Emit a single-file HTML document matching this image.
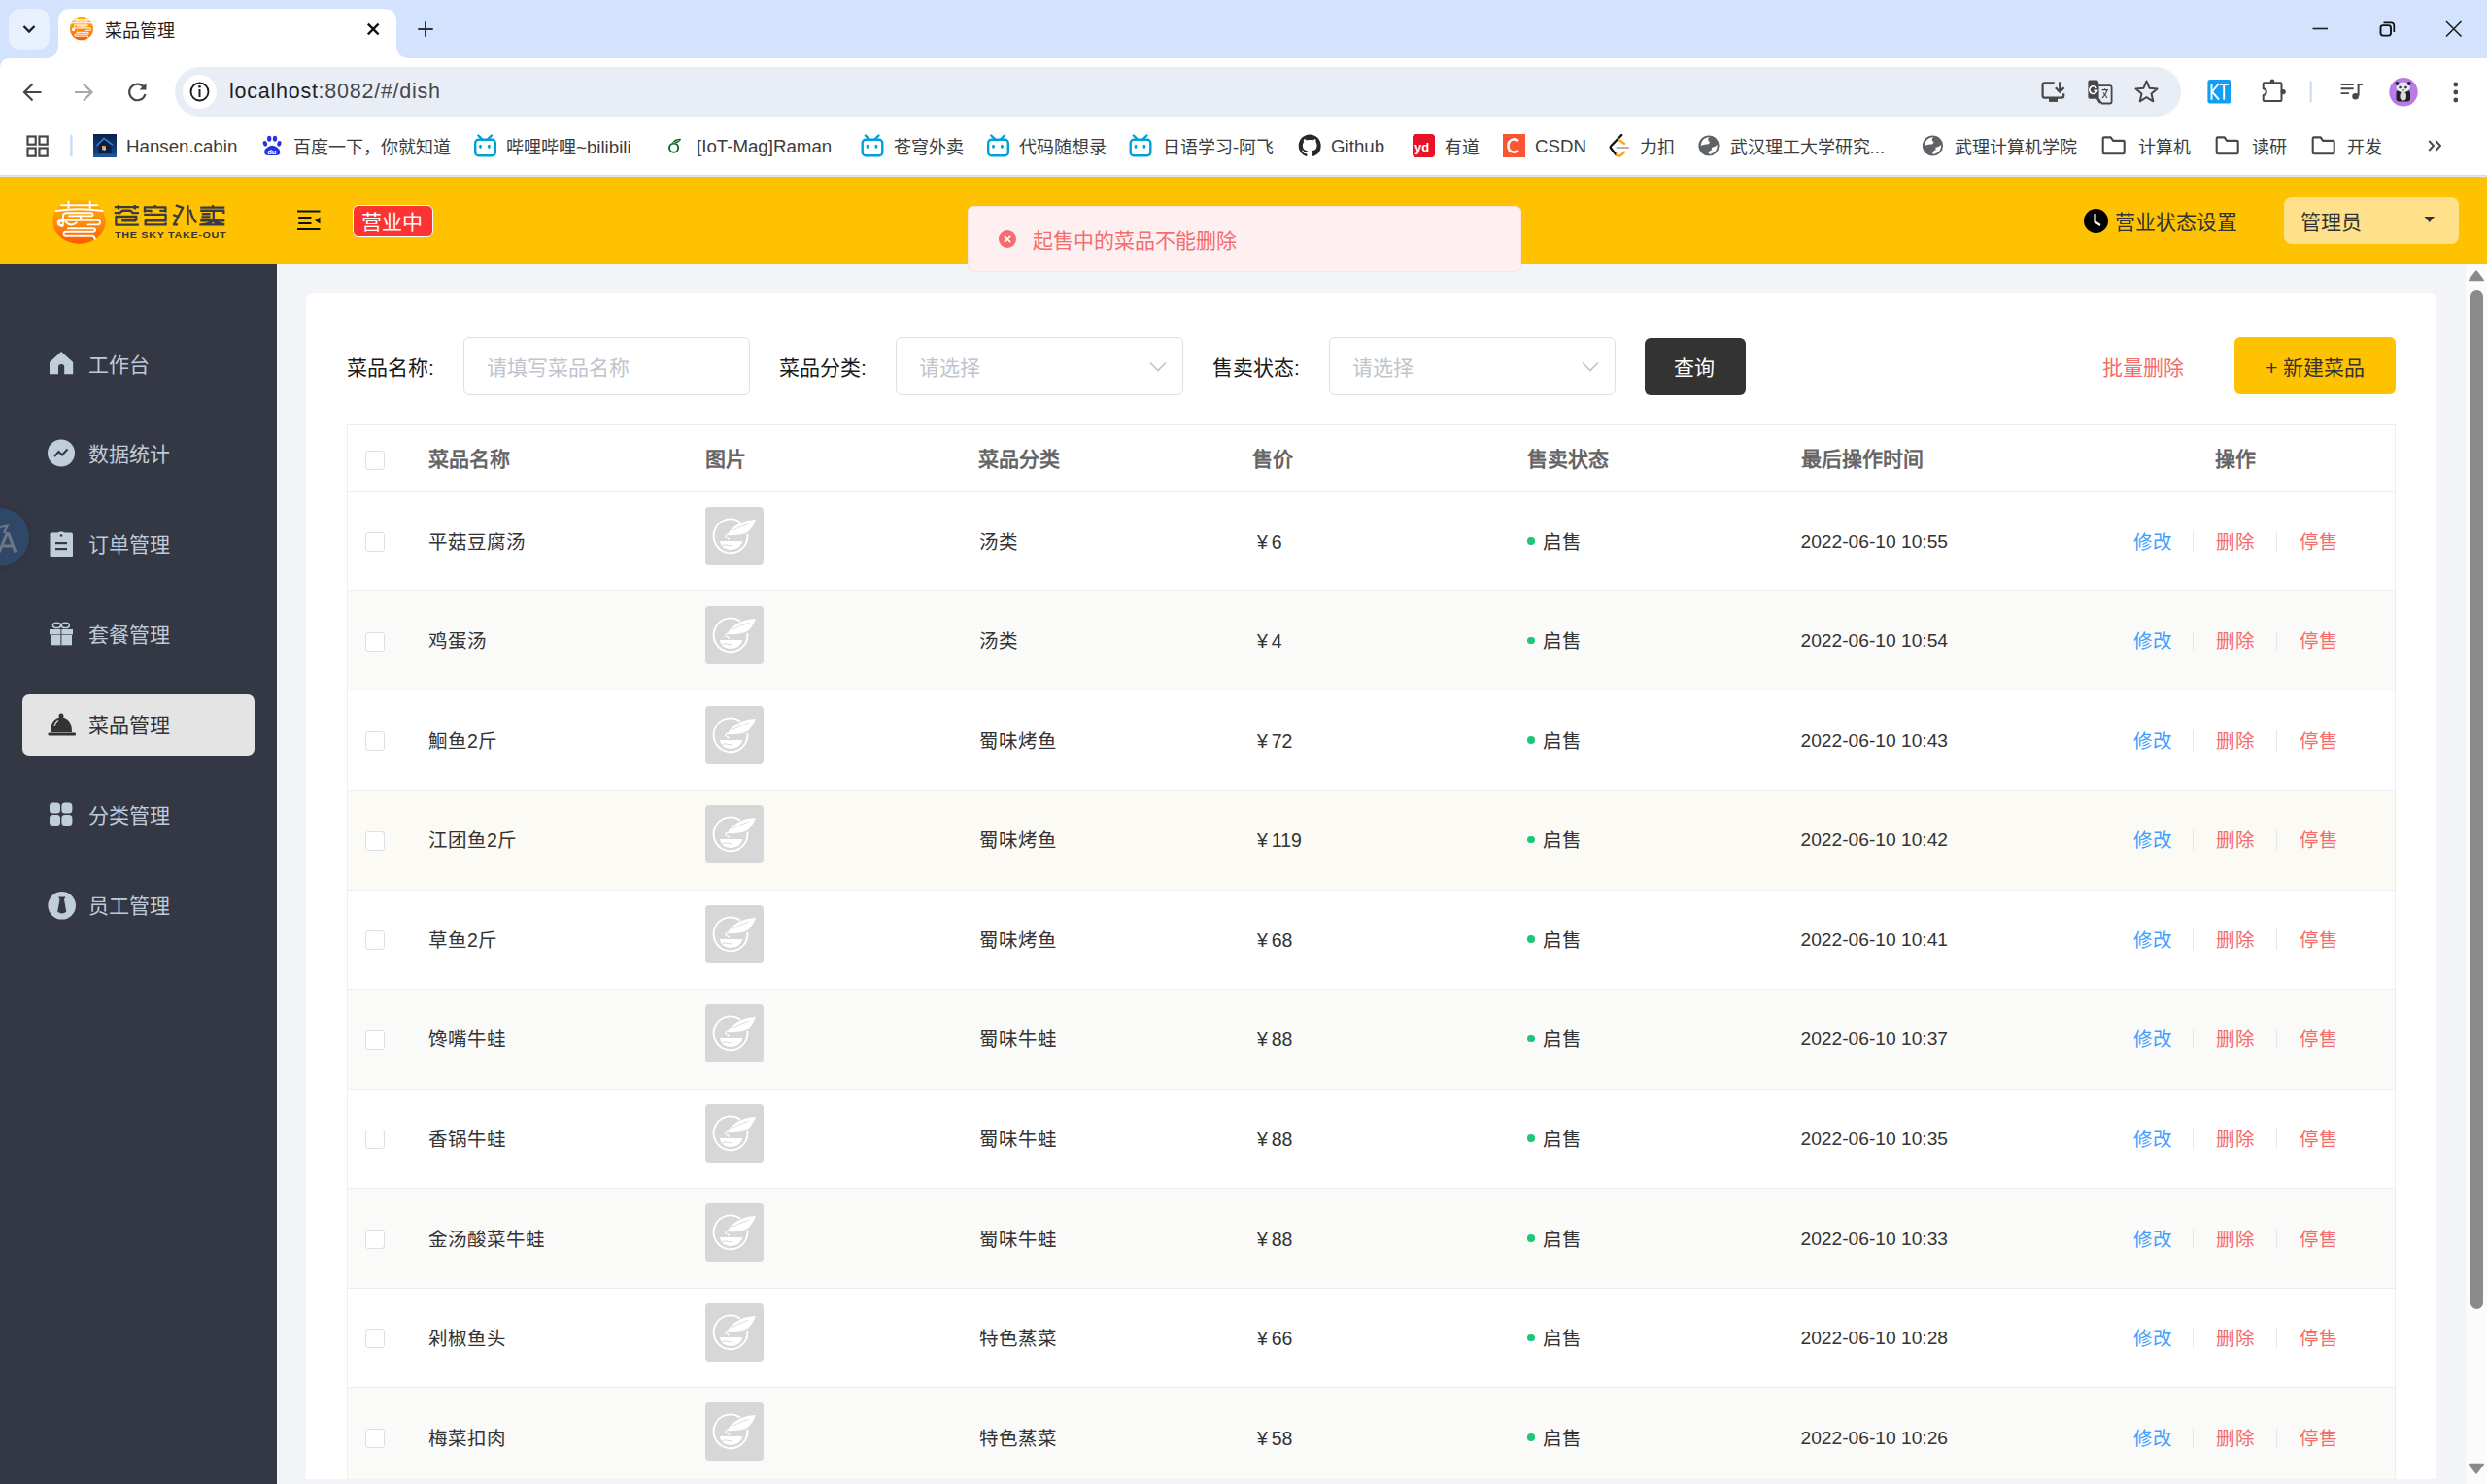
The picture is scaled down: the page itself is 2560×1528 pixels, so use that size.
<!DOCTYPE html><html lang="zh-CN"><head><meta charset="utf-8"><title>菜品管理</title><style>
*{box-sizing:border-box;margin:0;padding:0}
html,body{width:2560px;height:1528px;overflow:hidden;background:#fff}
body{position:relative;font-family:"Liberation Sans",sans-serif;color:#333}
.abs{position:absolute}
.t{position:absolute;white-space:nowrap;line-height:1}
svg{position:absolute;overflow:visible}
</style></head><body>
<div class="abs" style="left:0;top:0;width:2560px;height:60px;background:#d3e3fd"></div>
<div class="abs" style="left:0;top:60px;width:2560px;height:120px;background:#fff"></div>
<div class="abs" style="left:0;top:180px;width:2560px;height:1px;background:#dadce0"></div>
<svg style="left:0;top:60px" width="12" height="12"><path d="M0 0 H11 Q0 0 0 11 Z" fill="#d3e3fd"/></svg>
<div class="abs" style="left:0;top:181px;width:2560px;height:1px;background:#e3e7ef"></div>
<div class="abs" style="left:9px;top:9px;width:42px;height:42px;border-radius:12px;background:#e9f0fd"></div>
<svg style="left:0;top:0" width="60" height="60"><polyline points="24.5,27 30,32.5 35.5,27" fill="none" stroke="#1f1f1f" stroke-width="2.4"/></svg>
<svg style="left:0;top:0" width="460" height="61"><path d="M46 60 Q60 60 60 46 L60 22 Q60 9 73 9 L395 9 Q408 9 408 22 L408 46 Q408 60 422 60 Z" fill="#fff"/></svg>
<svg style="left:0;top:0" width="120" height="60">
<defs><linearGradient id="fg" x1="0" y1="0" x2="0" y2="1"><stop offset="0" stop-color="#ffb000"/><stop offset="0.55" stop-color="#ff8a0a"/><stop offset="1" stop-color="#ff5800"/></linearGradient></defs>
<g transform="translate(84 29.6) scale(0.44 0.515) translate(-33.5 -30)">
<ellipse cx="33.5" cy="30" rx="27.3" ry="22.8" fill="url(#fg)"/>
<g stroke="#fff" stroke-width="2.6" fill="none" stroke-linecap="round" opacity="0.85">
<path d="M15 13.3 H52.5"/><path d="M22.5 9.5 V16 M44.7 9.5 V16"/><path d="M9.8 19 Q33 15.5 57.5 19"/>
<path d="M17 27.5 V24 Q17 21.3 20.5 21.3 H45.5 Q47.5 21.3 47.5 22.9 Q47.5 24.4 45.5 24.4 H23"/><path d="M35 24.5 V27.5"/>
<path d="M19 28.7 H52.5 Q55 28.7 55 31 Q55 33.4 52.5 33.4 H42.6"/>
<path d="M22 37.3 H47.5 Q50 37.3 50 39 Q50 40.8 47.5 40.8 H20 Q17.5 40.8 17.5 42.8 Q17.5 44.7 20 44.7 H47.5 Q49.6 45.5 49.6 48"/>
</g><circle cx="14.3" cy="31.5" r="3.6" fill="#fff"/></g>
</svg>
<div class="t" style="left:107.5px;top:23px;font-size:18px;color:#1f1f1f;font-weight:normal;">菜品管理</div>
<svg style="left:0;top:0" width="460" height="60"><path d="M378.8 24.6 L389.6 35.4 M389.6 24.6 L378.8 35.4" stroke="#111" stroke-width="2.3"/><path d="M438 23 V37 M431 30 H445" stroke="#333" stroke-width="2" stroke-linecap="round"/></svg>
<svg style="left:2360px;top:0" width="200" height="60"><path d="M20.5 29.5 H36" stroke="#1f1f1f" stroke-width="1.6"/><rect x="90.5" y="26.1" width="10.5" height="10.5" rx="2.5" fill="none" stroke="#111" stroke-width="1.9"/><path d="M93.5 23.3 H101.2 Q104.3 23.3 104.3 26.4 V33" fill="none" stroke="#111" stroke-width="1.7"/><path d="M158 22 L173.5 37.5 M173.5 22 L158 37.5" stroke="#1f1f1f" stroke-width="1.6"/></svg>
<svg style="left:0;top:60px" width="240" height="60"><path d="M42.5 35 H25 M33.5 26.5 L25 35 L33.5 43.5" fill="none" stroke="#474747" stroke-width="2.2"/><path d="M77 35 H94.5 M86 26.5 L94.5 35 L86 43.5" fill="none" stroke="#a8a8a8" stroke-width="2.2"/><path d="M148.5 30.5 A8.3 8.3 0 1 0 149.5 37" fill="none" stroke="#474747" stroke-width="2.2"/><path d="M150.5 25.5 V32.5 H143.5 Z" fill="#474747"/></svg>
<div class="abs" style="left:180px;top:69px;width:2065px;height:51px;border-radius:26px;background:#e9eef6"></div>
<div class="abs" style="left:188px;top:77px;width:35px;height:35px;border-radius:50%;background:#fff"></div>
<svg style="left:0;top:60px" width="240" height="60"><circle cx="205.5" cy="34.5" r="9" fill="none" stroke="#1f1f1f" stroke-width="1.9"/><path d="M205.5 32 V40" stroke="#1f1f1f" stroke-width="2"/><circle cx="205.5" cy="29.2" r="1.3" fill="#1f1f1f"/></svg>
<div class="t" style="left:236px;top:84px;font-size:21.5px;color:#1f1f1f;font-weight:normal;letter-spacing:0.75px">localhost<span style="color:#474747">:8082/#/dish</span></div>
<svg style="left:2090px;top:60px" width="470" height="60"><path d="M24.7 25.3 H14.5 Q12.6 25.3 12.6 27.2 V38.8 Q12.6 40.7 14.5 40.7 H32.3 Q34.2 40.7 34.2 38.8 V36.2" fill="none" stroke="#474747" stroke-width="2.2"/><rect x="19" y="40.7" width="9" height="4.2" fill="#474747"/><path d="M30.2 24.2 V34.5 M25.8 30.2 L30.2 34.6 L34.6 30.2" fill="none" stroke="#474747" stroke-width="2.2"/><path d="M61 22.4 H68.3 Q69.3 22.4 69.7 23.5 L70.6 26.5 V41 L74.5 46.5 H72 Q70.8 46.5 70.2 45.5 L68 41.7 H61 Q59.4 41.7 59.4 40.1 V24 Q59.4 22.4 61 22.4 Z" fill="#474747"/><path d="M70.3 28.1 H81.6 Q83.6 28.1 83.6 30.1 V44.5 Q83.6 46.5 81.6 46.5 H73" fill="none" stroke="#474747" stroke-width="1.8"/><path d="M68.2 30.8 A3.9 3.9 0 1 0 68.6 33.2 H65.3" fill="none" stroke="#fff" stroke-width="1.6"/><path d="M73.5 32.7 H80 M76.5 31.2 V32.7 M79 32.7 Q78 37 74 41 M75 35.5 L79 41" fill="none" stroke="#474747" stroke-width="1.2"/><path d="M119.5 23.5 L122.6 30.8 L130.5 31.5 L124.5 36.6 L126.3 44.3 L119.5 40.2 L112.7 44.3 L114.5 36.6 L108.5 31.5 L116.4 30.8 Z" fill="none" stroke="#474747" stroke-width="2" stroke-linejoin="round"/><rect x="182.4" y="22" width="24" height="24.4" rx="2.5" fill="#129ff3"/><path d="M186.5 26 V42.7 M194 26 L187 34.4 L194 42.7 M194.6 27 H203.8 M199.2 27 V42.7" stroke="#fff" stroke-width="1.9" fill="none"/><path d="M240.7 25.3 H257.5 Q258.5 25.3 258.5 26.3 V43 Q258.5 44 257.5 44 H240.7 Q239.7 44 239.7 43 V38 Q242.8 37.5 242.8 34.6 Q242.8 31.7 239.7 31.2 V26.3 Q239.7 25.3 240.7 25.3 Z" fill="none" stroke="#474747" stroke-width="2" stroke-linejoin="round"/><circle cx="249" cy="23.8" r="2.3" fill="#474747"/><circle cx="260.2" cy="34.6" r="2.6" fill="#474747"/><rect x="287.6" y="23" width="2.2" height="22.5" rx="1" fill="#cfdcf8"/><path d="M319.6 27 H332.7 M319.6 31.3 H332.7 M319.6 36.1 H328" stroke="#474747" stroke-width="1.9"/><path d="M337.6 26 V38.5" stroke="#474747" stroke-width="2"/><path d="M336.6 27 H342" stroke="#474747" stroke-width="1.9"/><circle cx="334.6" cy="39.2" r="3.3" fill="#474747"/><circle cx="384" cy="34.8" r="14.7" fill="#b97be6"/><rect x="376.5" y="33" width="14.5" height="11.5" rx="3" fill="#222"/><ellipse cx="383.7" cy="39" rx="3.3" ry="4.6" fill="#ddd"/><ellipse cx="383.6" cy="29.8" rx="7.2" ry="5.4" fill="#e9e9e9"/><circle cx="377.4" cy="26" r="2" fill="#222"/><circle cx="389.8" cy="26" r="2" fill="#222"/><circle cx="380.5" cy="30" r="1.3" fill="#333"/><circle cx="386.5" cy="30" r="1.3" fill="#333"/><path d="M382 32.5 Q383.6 33.8 385.2 32.5" stroke="#333" stroke-width="0.9" fill="none"/><circle cx="437.8" cy="27" r="2.4" fill="#474747"/><circle cx="437.8" cy="35" r="2.4" fill="#474747"/><circle cx="437.8" cy="43" r="2.4" fill="#474747"/></svg>
<svg style="left:0;top:120px" width="2560" height="60">
<rect x="28.5" y="20.5" width="8.2" height="8.2" fill="none" stroke="#474747" stroke-width="2.2"/>
<rect x="28.5" y="32.5" width="8.2" height="8.2" fill="none" stroke="#474747" stroke-width="2.2"/>
<rect x="40.5" y="20.5" width="8.2" height="8.2" fill="none" stroke="#474747" stroke-width="2.2"/>
<rect x="40.5" y="32.5" width="8.2" height="8.2" fill="none" stroke="#474747" stroke-width="2.2"/>
<rect x="72.2" y="18.5" width="2.4" height="23" rx="1.2" fill="#c9dbfb"/>
<defs><linearGradient id="hg" x1="0" y1="0" x2="0" y2="1"><stop offset="0" stop-color="#0a2150"/><stop offset="1" stop-color="#164a8a"/></linearGradient></defs>
<rect x="96" y="18" width="24" height="24" fill="url(#hg)"/><path d="M101.5 38 V28.5 L107 23 L114.5 29.5 V38 Z" fill="#0b1e42"/><path d="M99.5 30 L107 22.6 L116 29.2" fill="none" stroke="#3b7fc8" stroke-width="1.5"/><rect x="105" y="30" width="3.8" height="4.4" fill="#f2a33a"/><rect x="107" y="32" width="1.8" height="2.4" fill="#7fe8ff"/><rect x="96" y="38.5" width="24" height="3.5" fill="#1d5aa0" opacity="0.8"/>
<g fill="#2932e1"><ellipse cx="272.9" cy="27.8" rx="2.1" ry="2.9" transform="rotate(-15 272.9 27.8)"/><ellipse cx="277.2" cy="22.8" rx="2.2" ry="3"/><ellipse cx="283" cy="22.8" rx="2.2" ry="3"/><ellipse cx="287.4" cy="27.8" rx="2.1" ry="2.9" transform="rotate(15 287.4 27.8)"/><path d="M272.2 36.5 Q272.5 33 275.5 31.5 Q278 29.8 280 29.8 Q282.5 29.8 285 31.5 Q288 33.5 288.3 36.5 Q288.5 40 284 40 H276.5 Q272 40 272.2 36.5 Z"/></g>
<text x="275.2" y="38.6" font-family="Liberation Sans" font-size="7.6" font-weight="bold" fill="#fff">du</text>
<g transform="translate(487.5,18)"><rect x="1.7" y="5.8" width="20.6" height="16.4" rx="3.3" fill="none" stroke="#00a1d6" stroke-width="2.4"/><path d="M4.8 1.5 L8.3 4.8 M18.5 1.5 L15 4.8" stroke="#00a1d6" stroke-width="2.4" stroke-linecap="round"/><ellipse cx="7" cy="12.8" rx="1.45" ry="2.1" fill="#00a1d6"/><ellipse cx="15.9" cy="12.8" rx="1.45" ry="2.1" fill="#00a1d6"/></g>
<g transform="translate(886,18)"><rect x="1.7" y="5.8" width="20.6" height="16.4" rx="3.3" fill="none" stroke="#00a1d6" stroke-width="2.4"/><path d="M4.8 1.5 L8.3 4.8 M18.5 1.5 L15 4.8" stroke="#00a1d6" stroke-width="2.4" stroke-linecap="round"/><ellipse cx="7" cy="12.8" rx="1.45" ry="2.1" fill="#00a1d6"/><ellipse cx="15.9" cy="12.8" rx="1.45" ry="2.1" fill="#00a1d6"/></g>
<g transform="translate(1015.5,18)"><rect x="1.7" y="5.8" width="20.6" height="16.4" rx="3.3" fill="none" stroke="#00a1d6" stroke-width="2.4"/><path d="M4.8 1.5 L8.3 4.8 M18.5 1.5 L15 4.8" stroke="#00a1d6" stroke-width="2.4" stroke-linecap="round"/><ellipse cx="7" cy="12.8" rx="1.45" ry="2.1" fill="#00a1d6"/><ellipse cx="15.9" cy="12.8" rx="1.45" ry="2.1" fill="#00a1d6"/></g>
<g transform="translate(1162,18)"><rect x="1.7" y="5.8" width="20.6" height="16.4" rx="3.3" fill="none" stroke="#00a1d6" stroke-width="2.4"/><path d="M4.8 1.5 L8.3 4.8 M18.5 1.5 L15 4.8" stroke="#00a1d6" stroke-width="2.4" stroke-linecap="round"/><ellipse cx="7" cy="12.8" rx="1.45" ry="2.1" fill="#00a1d6"/><ellipse cx="15.9" cy="12.8" rx="1.45" ry="2.1" fill="#00a1d6"/></g>
<circle cx="693.6" cy="32.2" r="4.6" fill="none" stroke="#0a6b2a" stroke-width="1.9"/><path d="M691.5 28.5 Q692.5 24.5 696.5 23.3 Q699 22.6 701.2 22.9 Q700.3 25.6 697.5 26.9 Q695 27.8 692.8 27.6 Z" fill="#0a6b2a"/><path d="M693 27.5 Q696 25.5 699 24.3" stroke="#fff" stroke-width="0.6" fill="none"/>
<path transform="translate(1336.7 18.5) scale(1.4375)" fill="#24292e" d="M8 0C3.58 0 0 3.58 0 8c0 3.54 2.29 6.53 5.47 7.59.4.07.55-.17.55-.38 0-.19-.01-.82-.01-1.49-2.01.37-2.53-.49-2.69-.94-.09-.23-.48-.94-.82-1.13-.28-.15-.68-.52-.01-.53.63-.01 1.08.58 1.23.82.72 1.21 1.87.87 2.33.66.07-.52.28-.87.51-1.07-1.780-.2-3.64-.89-3.64-3.95 0-.87.31-1.59.82-2.150-.08-.2-.36-1.02.08-2.12 0 0 .67-.21 2.2.82.64-.18 1.32-.27 2-.27.68 0 1.36.09 2 .27 1.53-1.04 2.2-.82 2.2-.82.44 1.1.16 1.92.08 2.12.51.56.82 1.27.82 2.15 0 3.07-1.87 3.75-3.65 3.95.29.25.54.73.54 1.48 0 1.07-.01 1.93-.01 2.2 0 .21.15.46.55.38A8.013 8.013 0 0016 8c0-4.42-3.58-8-8-8z"/>
<rect x="1454" y="18" width="23" height="24" rx="3.5" fill="#e8132a"/><text x="1456" y="35.5" font-family="Liberation Sans" font-size="13" font-weight="bold" fill="#fff">yd</text>
<rect x="1547" y="18" width="23" height="24" fill="#fc5531"/><path d="M1563 25 Q1560.5 23 1557.5 23.5 Q1552.5 24.5 1552.5 30 Q1552.5 36 1557.5 36.5 Q1560.5 37 1563 35" fill="none" stroke="#fff" stroke-width="2.6"/>
<path d="M1669.3 19 L1658.5 30 Q1657 31.5 1658.5 33 L1663.6 39.4" fill="none" stroke="#111" stroke-width="2.4" stroke-linecap="round"/><path d="M1666.2 23.7 L1672 27.9 M1663.8 39.6 Q1666.8 41.6 1669.3 39.3 L1672 36.5" fill="none" stroke="#ffa116" stroke-width="2.4" stroke-linecap="round"/><path d="M1664.6 32 H1676" stroke="#b3b3b3" stroke-width="2.2" stroke-linecap="round"/>
<circle cx="1759" cy="30" r="10.6" fill="#5f6368"/><path d="M1750.7 30 Q1751 22 1759.7 21 Q1757.2 23.5 1758.7 25 Q1761.2 26.5 1758.2 28.5 Q1754 28 1750.7 30 Z" fill="#fff"/><path d="M1767.7 29 Q1768.2 36.5 1760.2 39 Q1757.2 37.5 1759.7 35.5 Q1763.2 34 1761.7 32 Q1765.2 31.5 1767.7 29 Z" fill="#fff"/>
<circle cx="1989.5" cy="30" r="10.6" fill="#5f6368"/><path d="M1981.2 30 Q1981.5 22 1990.2 21 Q1987.7 23.5 1989.2 25 Q1991.7 26.5 1988.7 28.5 Q1984.5 28 1981.2 30 Z" fill="#fff"/><path d="M1998.2 29 Q1998.7 36.5 1990.7 39 Q1987.7 37.5 1990.2 35.5 Q1993.7 34 1992.2 32 Q1995.7 31.5 1998.2 29 Z" fill="#fff"/>
<path d="M2164.7 22.6 Q2164.7 21.4 2165.9 21.4 H2172.7 L2175.1 24.9 H2185.5 Q2186.7 24.9 2186.7 26.1 V37.1 Q2186.7 38.3 2185.5 38.3 H2165.9 Q2164.7 38.3 2164.7 37.1 Z" fill="none" stroke="#474747" stroke-width="2.1" stroke-linejoin="round"/>
<path d="M2281.7 22.6 Q2281.7 21.4 2282.9 21.4 H2289.7 L2292.1 24.9 H2302.5 Q2303.7 24.9 2303.7 26.1 V37.1 Q2303.7 38.3 2302.5 38.3 H2282.9 Q2281.7 38.3 2281.7 37.1 Z" fill="none" stroke="#474747" stroke-width="2.1" stroke-linejoin="round"/>
<path d="M2380.7 22.6 Q2380.7 21.4 2381.9 21.4 H2388.7 L2391.1 24.9 H2401.5 Q2402.7 24.9 2402.7 26.1 V37.1 Q2402.7 38.3 2401.5 38.3 H2381.9 Q2380.7 38.3 2380.7 37.1 Z" fill="none" stroke="#474747" stroke-width="2.1" stroke-linejoin="round"/>
<path d="M2500.3 25 L2505 30 L2500.3 35 M2507.3 25 L2512 30 L2507.3 35" fill="none" stroke="#474747" stroke-width="1.9"/>
</svg>
<div class="t" style="left:130px;top:141.8px;font-size:18px;color:#3c3c3c;font-weight:normal;"><span style="font-size:18.7px">Hansen.cabin</span></div>
<div class="t" style="left:301.5px;top:143px;font-size:18px;color:#3c3c3c;font-weight:normal;">百度一下，你就知道</div>
<div class="t" style="left:521px;top:143px;font-size:18px;color:#3c3c3c;font-weight:normal;">哔哩哔哩<span style="font-size:18.7px">~bilibili</span></div>
<div class="t" style="left:717px;top:141.8px;font-size:18px;color:#3c3c3c;font-weight:normal;"><span style="font-size:18.7px">[IoT-Mag]Raman</span></div>
<div class="t" style="left:920px;top:143px;font-size:18px;color:#3c3c3c;font-weight:normal;">苍穹外卖</div>
<div class="t" style="left:1049px;top:143px;font-size:18px;color:#3c3c3c;font-weight:normal;">代码随想录</div>
<div class="t" style="left:1197px;top:143px;font-size:18px;color:#3c3c3c;font-weight:normal;">日语学习<span style="font-size:18.7px">-</span>阿飞</div>
<div class="t" style="left:1370px;top:141.8px;font-size:18px;color:#3c3c3c;font-weight:normal;"><span style="font-size:18.7px">Github</span></div>
<div class="t" style="left:1487px;top:143px;font-size:18px;color:#3c3c3c;font-weight:normal;">有道</div>
<div class="t" style="left:1580px;top:141.8px;font-size:18px;color:#3c3c3c;font-weight:normal;"><span style="font-size:18.7px">CSDN</span></div>
<div class="t" style="left:1688px;top:143px;font-size:18px;color:#3c3c3c;font-weight:normal;">力扣</div>
<div class="t" style="left:1780.5px;top:143px;font-size:18px;color:#3c3c3c;font-weight:normal;">武汉理工大学研究<span style="font-size:18.7px">...</span></div>
<div class="t" style="left:2012px;top:143px;font-size:18px;color:#3c3c3c;font-weight:normal;">武理计算机学院</div>
<div class="t" style="left:2201px;top:143px;font-size:18px;color:#3c3c3c;font-weight:normal;">计算机</div>
<div class="t" style="left:2318px;top:143px;font-size:18px;color:#3c3c3c;font-weight:normal;">读研</div>
<div class="t" style="left:2416px;top:143px;font-size:18px;color:#3c3c3c;font-weight:normal;">开发</div>
<div class="abs" style="left:0;top:182px;width:2560px;height:90px;background:#ffc200"></div>
<svg style="left:48px;top:198px" width="70" height="58" viewBox="0 0 70 58">
<defs><linearGradient id="lg" x1="0" y1="0" x2="0" y2="1"><stop offset="0" stop-color="#ffb000"/><stop offset="0.55" stop-color="#ff8a0a"/><stop offset="1" stop-color="#ff5800"/></linearGradient></defs>
<ellipse cx="33.5" cy="30" rx="27.3" ry="22.8" fill="url(#lg)"/>
<g stroke="#fff" stroke-width="1.9" fill="none" stroke-linecap="round">
<path d="M15 13.3 H52.5"/>
<path d="M22.5 9.5 V16 M44.7 9.5 V16"/>
<path d="M9.8 19 Q33 15.5 57.5 19"/>
<path d="M17 27.5 V24 Q17 21.3 20.5 21.3 H45.5 Q47.5 21.3 47.5 22.9 Q47.5 24.4 45.5 24.4 H23"/>
<path d="M35 24.5 V27.5"/>
<path d="M19 28.7 H52.5 Q55 28.7 55 31 Q55 33.4 52.5 33.4 H42.6"/>
<path d="M19.5 30.5 Q25 36 30.8 31.3"/>
<path d="M22 37.3 H47.5 Q50 37.3 50 39 Q50 40.8 47.5 40.8 H20 Q17.5 40.8 17.5 42.8 Q17.5 44.7 20 44.7 H47.5 Q49.6 45.5 49.6 48"/>
</g>
<circle cx="14.3" cy="31.5" r="3.4" fill="#fff"/><circle cx="16.8" cy="29" r="2" fill="#fff"/><circle cx="15.5" cy="33.8" r="2.3" fill="#fff"/>
<circle cx="15.2" cy="31.8" r="1.2" fill="#ff8f0a"/>
</svg>
<svg style="left:110px;top:200px" width="130" height="40" viewBox="110 200 130 40"><g fill="none" stroke="#383b44" stroke-width="2.35" stroke-linecap="butt" stroke-linejoin="round">
<path d="M117.8 213.1 H142.9 M122 211 V215.4 M138.8 211 V215.4"/>
<path d="M117.8 219.1 H123.5 Q125 216.7 127 216.7 H133.5 Q135.3 216.7 136.6 219.1 H142.9"/>
<path d="M140.3 227.2 V223 H119.4 V231.6 H142.9 M125.2 227.2 H140.3"/>
<path d="M159.7 211 V213.2 M149 218.6 V213.3 H170.4 V218.6 M149.7 216.9 H155.5 V218.6 M164.4 216.9 H170.4"/>
<path d="M148.2 220.9 H170.6 V227.2 H149.7 V231.4 H171.7 M170.6 229.3 V231.4"/>
<path d="M180.8 211.4 L188.3 213.8 L179 231.4 M177.8 231.4 H183 M178.2 221 L183.4 223.2"/>
<path d="M193.4 211.2 V231.9 M195.7 215.7 Q198 226 202.2 229.3"/>
<path d="M206.2 213.6 H231.3 M219 211 V213.6 M206.2 216.7 H230.3 V219.9 M207.8 220.2 H216.6 M207.4 223.3 H216.6 M219.8 218 V227.2 M206.2 227.2 H231.3 M219.8 227.2 Q216 231 206.2 231.4 H231.3 M220 228.5 L231.3 231.4"/>
</g></svg>
<div class="t" style="left:117.5px;top:238.2px;font-size:9.2px;color:#353535;font-weight:bold;letter-spacing:0.6px;transform:scaleX(1.17);transform-origin:0 0">THE SKY TAKE-OUT</div>
<svg style="left:300px;top:210px" width="40" height="32"><path d="M6 7.4 H29.5 M7.2 14 H20.5 M7.2 20 H20.5 M6 26.1 H29.5" stroke="#111" stroke-width="2"/><path d="M29.5 13.5 L24 17 L29.5 20.5 Z" fill="#111"/></svg>
<div class="abs" style="left:363px;top:211px;width:83px;height:33px;border-radius:6px;background:#fd3333;border:1.5px solid #fff"></div>
<div class="t" style="left:372px;top:218px;font-size:21px;color:#fff;font-weight:normal;">营业中</div>
<div class="abs" style="left:996px;top:212px;width:570px;height:68px;border-radius:6px;background:#fef0f0;border:1.5px solid #fde2e2;z-index:20"></div>
<svg style="left:1020px;top:230px;z-index:21" width="40" height="32"><circle cx="17" cy="16" r="9" fill="#f56c6c"/><path d="M13.8 12.8 L20.2 19.2 M20.2 12.8 L13.8 19.2" stroke="#fff" stroke-width="1.8"/></svg>
<div class="t" style="left:1062.5px;top:237px;font-size:21px;color:#f56c6c;font-weight:normal;z-index:21">起售中的菜品不能删除</div>
<svg style="left:2140px;top:210px" width="40" height="36"><circle cx="17.5" cy="17.5" r="12.5" fill="#000"/><path d="M16.5 10 V18.5 L22 22" stroke="#fff" stroke-width="2.2" fill="none"/></svg>
<div class="t" style="left:2177px;top:218px;font-size:21px;color:#333;font-weight:normal;">营业状态设置</div>
<div class="abs" style="left:2351px;top:203px;width:180px;height:48px;border-radius:8px;background:#ffe18b"></div>
<div class="t" style="left:2368px;top:218px;font-size:21px;color:#333;font-weight:normal;">管理员</div>
<svg style="left:2490px;top:218px" width="20" height="16"><path d="M5.5 5 H16 L10.75 11 Z" fill="#333"/></svg>
<div class="abs" style="left:0;top:272px;width:285px;height:1256px;background:#343744"></div>
<div class="abs" style="left:23px;top:715px;width:239px;height:63px;border-radius:7px;background:#e4e4e4"></div>
<div class="t" style="left:91px;top:364.5px;font-size:21px;color:#bfcbd9;font-weight:normal;">工作台</div>
<div class="t" style="left:91px;top:457.4px;font-size:21px;color:#bfcbd9;font-weight:normal;">数据统计</div>
<div class="t" style="left:91px;top:550.3px;font-size:21px;color:#bfcbd9;font-weight:normal;">订单管理</div>
<div class="t" style="left:91px;top:643.2px;font-size:21px;color:#bfcbd9;font-weight:normal;">套餐管理</div>
<div class="t" style="left:91px;top:736.1px;font-size:21px;color:#333;font-weight:normal;">菜品管理</div>
<div class="t" style="left:91px;top:829.0px;font-size:21px;color:#bfcbd9;font-weight:normal;">分类管理</div>
<div class="t" style="left:91px;top:921.9px;font-size:21px;color:#bfcbd9;font-weight:normal;">员工管理</div>
<svg style="left:0;top:272px" width="285" height="700">
<path d="M63 90 L75.2 101 V113.2 H66.2 V106 Q66.2 103 63.1 103 Q60 103 60 106 V113.2 H51 V101 Z" fill="#c0cedc"/>
<circle cx="63" cy="194.5" r="14" fill="#c0cedc"/><path d="M56 198 L60.5 193 L64 196.5 L69.5 190.5" stroke="#343744" stroke-width="2" fill="none"/>
<rect x="51.5" y="276.5" width="23.5" height="25" rx="1.8" fill="#c0cedc"/><path d="M59 277 Q63 273.5 67 277 Z" fill="#c0cedc"/><circle cx="63" cy="279.5" r="1.3" fill="#343744"/><rect x="57" y="286" width="12" height="2.2" fill="#343744"/><rect x="57" y="292" width="12" height="2.2" fill="#343744"/>
<rect x="51" y="376" width="24" height="5.4" fill="#c0cedc"/><rect x="52.2" y="382" width="21.8" height="10.3" fill="#c0cedc"/><path d="M62.9 376 V392.5" stroke="#343744" stroke-width="1"/><ellipse cx="58.5" cy="371.9" rx="4" ry="2.6" fill="none" stroke="#c0cedc" stroke-width="1.6"/><ellipse cx="67.3" cy="371.9" rx="4" ry="2.6" fill="none" stroke="#c0cedc" stroke-width="1.6"/>
<circle cx="63" cy="465" r="2.5" fill="#333"/><path d="M52 482 Q52 467 63 466.5 Q74 467 74 482 Z" fill="#333"/><rect x="49.5" y="482.5" width="28.5" height="3" rx="1" fill="#333"/><path d="M56 476 Q57 471 60 469.5" stroke="#e4e4e4" stroke-width="1.2" fill="none"/>
<rect x="51" y="554.5" width="11" height="11" rx="3.5" fill="#c0cedc"/><rect x="63.4" y="554.5" width="11" height="11" rx="3.5" fill="#c0cedc"/><rect x="51" y="566.9" width="11" height="11" rx="3.5" fill="#c0cedc"/><rect x="63.4" y="566.9" width="11" height="11" rx="3.5" fill="#c0cedc"/>
<circle cx="63.7" cy="660.3" r="14.3" fill="#c0cedc"/><path d="M60 651.6 H67.5 L66 654 L68.3 666.8 Q63.8 670.3 59.2 666.8 L61.5 654 Z" fill="#343744"/>
</svg>
<div class="abs" style="left:-30px;top:523px;width:60px;height:60px;border-radius:50%;background:#2f4868;box-shadow:0 0 6px rgba(0,0,0,0.15)"></div>
<svg style="left:0;top:523px" width="32" height="60"><path d="M-1 45.5 L7.2 26.5 H8.8 L16 45.5 M2.5 39 H12.5" stroke="#6e7684" stroke-width="3" fill="none"/><path d="M0 20 L7.5 18.5 L4 26" stroke="#6e7684" stroke-width="2.2" fill="none"/></svg>
<div class="abs" style="left:285px;top:272px;width:2253px;height:1256px;background:#f3f4f7"></div>
<div class="abs" style="left:2538px;top:272px;width:22px;height:1256px;background:#fbfbfb"></div>
<svg style="left:2538px;top:272px" width="22" height="1256"><path d="M11 7 L18.3 16.5 H3.7 Z" fill="#8a8a8a" stroke="#8a8a8a" stroke-width="1.5" stroke-linejoin="round"/><rect x="5" y="27" width="13" height="1049" rx="6.5" fill="#8a8a8a"/><path d="M11 1245 L18.3 1235.5 H3.7 Z" fill="#8a8a8a" stroke="#8a8a8a" stroke-width="1.5" stroke-linejoin="round"/></svg>
<div class="abs" style="left:315px;top:302px;width:2193px;height:1221px;border-radius:7px 7px 0 0;background:#fff;overflow:hidden">
<div class="t" style="left:42px;top:66px;font-size:21px;color:#1a1a1a;font-weight:normal;">菜品名称:</div>
<div class="abs" style="left:162px;top:45px;width:295px;height:60px;border:1.5px solid #dcdfe6;border-radius:6px"></div>
<div class="t" style="left:186px;top:66px;font-size:21px;color:#c0c4cc;font-weight:normal;">请填写菜品名称</div>
<div class="t" style="left:487px;top:66px;font-size:21px;color:#1a1a1a;font-weight:normal;">菜品分类:</div>
<div class="abs" style="left:607px;top:45px;width:295.5px;height:60px;border:1.5px solid #dcdfe6;border-radius:6px"></div>
<div class="t" style="left:631px;top:66px;font-size:21px;color:#c0c4cc;font-weight:normal;">请选择</div>
<div class="t" style="left:933px;top:66px;font-size:21px;color:#1a1a1a;font-weight:normal;">售卖状态:</div>
<div class="abs" style="left:1053px;top:45px;width:294.5px;height:60px;border:1.5px solid #dcdfe6;border-radius:6px"></div>
<div class="t" style="left:1077px;top:66px;font-size:21px;color:#c0c4cc;font-weight:normal;">请选择</div>
<svg style="left:865px;top:66px" width="24" height="20"><path d="M4 5.5 L12 13.5 L20 5.5" fill="none" stroke="#c0c4cc" stroke-width="1.6"/></svg>
<svg style="left:1310px;top:66px" width="24" height="20"><path d="M4 5.5 L12 13.5 L20 5.5" fill="none" stroke="#c0c4cc" stroke-width="1.6"/></svg>
<div class="abs" style="left:1377.5px;top:46px;width:104.5px;height:58.5px;background:#333;border-radius:6px"></div>
<div class="t" style="left:1408px;top:66px;font-size:21px;color:#fff;font-weight:normal;">查询</div>
<div class="t" style="left:1849px;top:66px;font-size:21px;color:#f56c6c;font-weight:normal;">批量删除</div>
<div class="abs" style="left:1985px;top:45px;width:166px;height:58.5px;background:#ffc200;border-radius:6px"></div>
<div class="t" style="left:2017px;top:66px;font-size:21px;color:#333;font-weight:normal;">+ 新建菜品</div>
<div class="abs" style="left:42px;top:204.5px;width:2109px;height:102.53px;background:#fff"></div>
<div class="abs" style="left:42px;top:307.03px;width:2109px;height:102.53px;background:#fafaf9"></div>
<div class="abs" style="left:42px;top:409.56px;width:2109px;height:102.53px;background:#fff"></div>
<div class="abs" style="left:42px;top:512.09px;width:2109px;height:102.53px;background:#fbfaf4"></div>
<div class="abs" style="left:42px;top:614.62px;width:2109px;height:102.53px;background:#fff"></div>
<div class="abs" style="left:42px;top:717.15px;width:2109px;height:102.53px;background:#fafaf9"></div>
<div class="abs" style="left:42px;top:819.68px;width:2109px;height:102.53px;background:#fff"></div>
<div class="abs" style="left:42px;top:922.21px;width:2109px;height:102.53px;background:#fafaf9"></div>
<div class="abs" style="left:42px;top:1024.74px;width:2109px;height:102.53px;background:#fff"></div>
<div class="abs" style="left:42px;top:1127.27px;width:2109px;height:102.53px;background:#fafaf9"></div>
<div class="abs" style="left:42px;top:135px;width:2109px;height:1px;background:#ebeef5"></div>
<div class="abs" style="left:42px;top:135px;width:1px;height:1300px;background:#ebeef5"></div>
<div class="abs" style="left:2150px;top:135px;width:1px;height:1300px;background:#ebeef5"></div>
<div class="abs" style="left:42px;top:203.5px;width:2109px;height:1px;background:#ebeef5"></div>
<div class="abs" style="left:42px;top:306.0px;width:2109px;height:1px;background:#ebeef5"></div>
<div class="abs" style="left:42px;top:408.6px;width:2109px;height:1px;background:#ebeef5"></div>
<div class="abs" style="left:42px;top:511.1px;width:2109px;height:1px;background:#ebeef5"></div>
<div class="abs" style="left:42px;top:613.6px;width:2109px;height:1px;background:#ebeef5"></div>
<div class="abs" style="left:42px;top:716.1px;width:2109px;height:1px;background:#ebeef5"></div>
<div class="abs" style="left:42px;top:818.7px;width:2109px;height:1px;background:#ebeef5"></div>
<div class="abs" style="left:42px;top:921.2px;width:2109px;height:1px;background:#ebeef5"></div>
<div class="abs" style="left:42px;top:1023.7px;width:2109px;height:1px;background:#ebeef5"></div>
<div class="abs" style="left:42px;top:1126.3px;width:2109px;height:1px;background:#ebeef5"></div>
<div class="abs" style="left:61px;top:161.5px;width:20px;height:20px;border:1.2px solid #dcdfe6;border-radius:3px;background:#fff"></div>
<div class="t" style="left:125.5px;top:160px;font-size:21px;color:#666;font-weight:bold;">菜品名称</div>
<div class="t" style="left:410.5px;top:160px;font-size:21px;color:#666;font-weight:bold;">图片</div>
<div class="t" style="left:692px;top:160px;font-size:21px;color:#666;font-weight:bold;">菜品分类</div>
<div class="t" style="left:974px;top:160px;font-size:21px;color:#666;font-weight:bold;">售价</div>
<div class="t" style="left:1257px;top:160px;font-size:21px;color:#666;font-weight:bold;">售卖状态</div>
<div class="t" style="left:1538.5px;top:160px;font-size:21px;color:#666;font-weight:bold;">最后操作时间</div>
<div class="t" style="left:1964.5px;top:160px;font-size:21px;color:#666;font-weight:bold;">操作</div>
<div class="abs" style="left:61px;top:246.1px;width:20px;height:20px;border:1.2px solid #dcdfe6;border-radius:3px;background:#fff"></div>
<div class="t" style="left:126px;top:246.8px;font-size:19.5px;color:#333;font-weight:normal;">平菇豆腐汤</div>
<div class="abs" style="left:411px;top:219.5px;width:60px;height:60px;border-radius:4px;background:#d7d7d7;overflow:hidden"><svg width="60" height="60" viewBox="0 0 60 60" style="position:absolute;left:0;top:0">
<path d="M36 15.6 A17.4 17.4 0 1 0 43.3 27.8" fill="none" stroke="#fff" stroke-width="1.9"/>
<path d="M22.5 29 Q26 22 35 17 Q42 13.5 52 13 Q49 21 44 25.5 Q38 29.8 22.5 29 Z" fill="#fff"/>
<path d="M27.5 24.5 Q36 20 44.6 17.2" stroke="#d8d8d8" stroke-width="0.9" fill="none"/>
<path d="M23.2 28 Q19 30 22 31.5 Q25.5 32.5 23.5 33.4" stroke="#fff" stroke-width="1.3" fill="none"/>
<path d="M14.8 34.9 H38.2 Q36.5 43.8 26 44 Q16.5 43.5 14.8 34.9 Z" fill="#fff"/>
<path d="M17.5 39.6 Q21 38 24 39.6 Q26 40.3 28 39.5" stroke="#d8d8d8" stroke-width="1" fill="none"/>
</svg></div>
<div class="t" style="left:692.5px;top:246.8px;font-size:19.5px;color:#333;font-weight:normal;">汤类</div>
<div class="t" style="left:979px;top:246.8px;font-size:19.5px;color:#333;font-weight:normal;">¥&thinsp;6</div>
<div class="abs" style="left:1257px;top:251.3px;width:7.5px;height:7.5px;border-radius:50%;background:#1dc779"></div>
<div class="t" style="left:1272.5px;top:246.8px;font-size:19.5px;color:#333;font-weight:normal;">启售</div>
<div class="t" style="left:1538.5px;top:245.8px;font-size:19.2px;color:#333;font-weight:normal;">2022-06-10 10:55</div>
<div class="t" style="left:1880.5px;top:246.8px;font-size:19.5px;color:#419eff;font-weight:normal;">修改</div>
<div class="abs" style="left:1942px;top:245.3px;width:1.2px;height:20.5px;background:#e4e7ed"></div>
<div class="t" style="left:1966px;top:246.8px;font-size:19.5px;color:#f56c6c;font-weight:normal;">删除</div>
<div class="abs" style="left:2028px;top:245.3px;width:1.2px;height:20.5px;background:#e4e7ed"></div>
<div class="t" style="left:2052px;top:246.8px;font-size:19.5px;color:#f56c6c;font-weight:normal;">停售</div>
<div class="abs" style="left:61px;top:348.6px;width:20px;height:20px;border:1.2px solid #dcdfe6;border-radius:3px;background:#fff"></div>
<div class="t" style="left:126px;top:349.3px;font-size:19.5px;color:#333;font-weight:normal;">鸡蛋汤</div>
<div class="abs" style="left:411px;top:322.0px;width:60px;height:60px;border-radius:4px;background:#d7d7d7;overflow:hidden"><svg width="60" height="60" viewBox="0 0 60 60" style="position:absolute;left:0;top:0">
<path d="M36 15.6 A17.4 17.4 0 1 0 43.3 27.8" fill="none" stroke="#fff" stroke-width="1.9"/>
<path d="M22.5 29 Q26 22 35 17 Q42 13.5 52 13 Q49 21 44 25.5 Q38 29.8 22.5 29 Z" fill="#fff"/>
<path d="M27.5 24.5 Q36 20 44.6 17.2" stroke="#d8d8d8" stroke-width="0.9" fill="none"/>
<path d="M23.2 28 Q19 30 22 31.5 Q25.5 32.5 23.5 33.4" stroke="#fff" stroke-width="1.3" fill="none"/>
<path d="M14.8 34.9 H38.2 Q36.5 43.8 26 44 Q16.5 43.5 14.8 34.9 Z" fill="#fff"/>
<path d="M17.5 39.6 Q21 38 24 39.6 Q26 40.3 28 39.5" stroke="#d8d8d8" stroke-width="1" fill="none"/>
</svg></div>
<div class="t" style="left:692.5px;top:349.3px;font-size:19.5px;color:#333;font-weight:normal;">汤类</div>
<div class="t" style="left:979px;top:349.3px;font-size:19.5px;color:#333;font-weight:normal;">¥&thinsp;4</div>
<div class="abs" style="left:1257px;top:353.8px;width:7.5px;height:7.5px;border-radius:50%;background:#1dc779"></div>
<div class="t" style="left:1272.5px;top:349.3px;font-size:19.5px;color:#333;font-weight:normal;">启售</div>
<div class="t" style="left:1538.5px;top:348.3px;font-size:19.2px;color:#333;font-weight:normal;">2022-06-10 10:54</div>
<div class="t" style="left:1880.5px;top:349.3px;font-size:19.5px;color:#419eff;font-weight:normal;">修改</div>
<div class="abs" style="left:1942px;top:347.8px;width:1.2px;height:20.5px;background:#e4e7ed"></div>
<div class="t" style="left:1966px;top:349.3px;font-size:19.5px;color:#f56c6c;font-weight:normal;">删除</div>
<div class="abs" style="left:2028px;top:347.8px;width:1.2px;height:20.5px;background:#e4e7ed"></div>
<div class="t" style="left:2052px;top:349.3px;font-size:19.5px;color:#f56c6c;font-weight:normal;">停售</div>
<div class="abs" style="left:61px;top:451.1px;width:20px;height:20px;border:1.2px solid #dcdfe6;border-radius:3px;background:#fff"></div>
<div class="t" style="left:126px;top:451.8px;font-size:19.5px;color:#333;font-weight:normal;">鮰鱼2斤</div>
<div class="abs" style="left:411px;top:424.6px;width:60px;height:60px;border-radius:4px;background:#d7d7d7;overflow:hidden"><svg width="60" height="60" viewBox="0 0 60 60" style="position:absolute;left:0;top:0">
<path d="M36 15.6 A17.4 17.4 0 1 0 43.3 27.8" fill="none" stroke="#fff" stroke-width="1.9"/>
<path d="M22.5 29 Q26 22 35 17 Q42 13.5 52 13 Q49 21 44 25.5 Q38 29.8 22.5 29 Z" fill="#fff"/>
<path d="M27.5 24.5 Q36 20 44.6 17.2" stroke="#d8d8d8" stroke-width="0.9" fill="none"/>
<path d="M23.2 28 Q19 30 22 31.5 Q25.5 32.5 23.5 33.4" stroke="#fff" stroke-width="1.3" fill="none"/>
<path d="M14.8 34.9 H38.2 Q36.5 43.8 26 44 Q16.5 43.5 14.8 34.9 Z" fill="#fff"/>
<path d="M17.5 39.6 Q21 38 24 39.6 Q26 40.3 28 39.5" stroke="#d8d8d8" stroke-width="1" fill="none"/>
</svg></div>
<div class="t" style="left:692.5px;top:451.8px;font-size:19.5px;color:#333;font-weight:normal;">蜀味烤鱼</div>
<div class="t" style="left:979px;top:451.8px;font-size:19.5px;color:#333;font-weight:normal;">¥&thinsp;72</div>
<div class="abs" style="left:1257px;top:456.3px;width:7.5px;height:7.5px;border-radius:50%;background:#1dc779"></div>
<div class="t" style="left:1272.5px;top:451.8px;font-size:19.5px;color:#333;font-weight:normal;">启售</div>
<div class="t" style="left:1538.5px;top:450.8px;font-size:19.2px;color:#333;font-weight:normal;">2022-06-10 10:43</div>
<div class="t" style="left:1880.5px;top:451.8px;font-size:19.5px;color:#419eff;font-weight:normal;">修改</div>
<div class="abs" style="left:1942px;top:450.3px;width:1.2px;height:20.5px;background:#e4e7ed"></div>
<div class="t" style="left:1966px;top:451.8px;font-size:19.5px;color:#f56c6c;font-weight:normal;">删除</div>
<div class="abs" style="left:2028px;top:450.3px;width:1.2px;height:20.5px;background:#e4e7ed"></div>
<div class="t" style="left:2052px;top:451.8px;font-size:19.5px;color:#f56c6c;font-weight:normal;">停售</div>
<div class="abs" style="left:61px;top:553.7px;width:20px;height:20px;border:1.2px solid #dcdfe6;border-radius:3px;background:#fff"></div>
<div class="t" style="left:126px;top:554.4px;font-size:19.5px;color:#333;font-weight:normal;">江团鱼2斤</div>
<div class="abs" style="left:411px;top:527.1px;width:60px;height:60px;border-radius:4px;background:#d7d7d7;overflow:hidden"><svg width="60" height="60" viewBox="0 0 60 60" style="position:absolute;left:0;top:0">
<path d="M36 15.6 A17.4 17.4 0 1 0 43.3 27.8" fill="none" stroke="#fff" stroke-width="1.9"/>
<path d="M22.5 29 Q26 22 35 17 Q42 13.5 52 13 Q49 21 44 25.5 Q38 29.8 22.5 29 Z" fill="#fff"/>
<path d="M27.5 24.5 Q36 20 44.6 17.2" stroke="#d8d8d8" stroke-width="0.9" fill="none"/>
<path d="M23.2 28 Q19 30 22 31.5 Q25.5 32.5 23.5 33.4" stroke="#fff" stroke-width="1.3" fill="none"/>
<path d="M14.8 34.9 H38.2 Q36.5 43.8 26 44 Q16.5 43.5 14.8 34.9 Z" fill="#fff"/>
<path d="M17.5 39.6 Q21 38 24 39.6 Q26 40.3 28 39.5" stroke="#d8d8d8" stroke-width="1" fill="none"/>
</svg></div>
<div class="t" style="left:692.5px;top:554.4px;font-size:19.5px;color:#333;font-weight:normal;">蜀味烤鱼</div>
<div class="t" style="left:979px;top:554.4px;font-size:19.5px;color:#333;font-weight:normal;">¥&thinsp;119</div>
<div class="abs" style="left:1257px;top:558.9px;width:7.5px;height:7.5px;border-radius:50%;background:#1dc779"></div>
<div class="t" style="left:1272.5px;top:554.4px;font-size:19.5px;color:#333;font-weight:normal;">启售</div>
<div class="t" style="left:1538.5px;top:553.4px;font-size:19.2px;color:#333;font-weight:normal;">2022-06-10 10:42</div>
<div class="t" style="left:1880.5px;top:554.4px;font-size:19.5px;color:#419eff;font-weight:normal;">修改</div>
<div class="abs" style="left:1942px;top:552.9px;width:1.2px;height:20.5px;background:#e4e7ed"></div>
<div class="t" style="left:1966px;top:554.4px;font-size:19.5px;color:#f56c6c;font-weight:normal;">删除</div>
<div class="abs" style="left:2028px;top:552.9px;width:1.2px;height:20.5px;background:#e4e7ed"></div>
<div class="t" style="left:2052px;top:554.4px;font-size:19.5px;color:#f56c6c;font-weight:normal;">停售</div>
<div class="abs" style="left:61px;top:656.2px;width:20px;height:20px;border:1.2px solid #dcdfe6;border-radius:3px;background:#fff"></div>
<div class="t" style="left:126px;top:656.9px;font-size:19.5px;color:#333;font-weight:normal;">草鱼2斤</div>
<div class="abs" style="left:411px;top:629.6px;width:60px;height:60px;border-radius:4px;background:#d7d7d7;overflow:hidden"><svg width="60" height="60" viewBox="0 0 60 60" style="position:absolute;left:0;top:0">
<path d="M36 15.6 A17.4 17.4 0 1 0 43.3 27.8" fill="none" stroke="#fff" stroke-width="1.9"/>
<path d="M22.5 29 Q26 22 35 17 Q42 13.5 52 13 Q49 21 44 25.5 Q38 29.8 22.5 29 Z" fill="#fff"/>
<path d="M27.5 24.5 Q36 20 44.6 17.2" stroke="#d8d8d8" stroke-width="0.9" fill="none"/>
<path d="M23.2 28 Q19 30 22 31.5 Q25.5 32.5 23.5 33.4" stroke="#fff" stroke-width="1.3" fill="none"/>
<path d="M14.8 34.9 H38.2 Q36.5 43.8 26 44 Q16.5 43.5 14.8 34.9 Z" fill="#fff"/>
<path d="M17.5 39.6 Q21 38 24 39.6 Q26 40.3 28 39.5" stroke="#d8d8d8" stroke-width="1" fill="none"/>
</svg></div>
<div class="t" style="left:692.5px;top:656.9px;font-size:19.5px;color:#333;font-weight:normal;">蜀味烤鱼</div>
<div class="t" style="left:979px;top:656.9px;font-size:19.5px;color:#333;font-weight:normal;">¥&thinsp;68</div>
<div class="abs" style="left:1257px;top:661.4px;width:7.5px;height:7.5px;border-radius:50%;background:#1dc779"></div>
<div class="t" style="left:1272.5px;top:656.9px;font-size:19.5px;color:#333;font-weight:normal;">启售</div>
<div class="t" style="left:1538.5px;top:655.9px;font-size:19.2px;color:#333;font-weight:normal;">2022-06-10 10:41</div>
<div class="t" style="left:1880.5px;top:656.9px;font-size:19.5px;color:#419eff;font-weight:normal;">修改</div>
<div class="abs" style="left:1942px;top:655.4px;width:1.2px;height:20.5px;background:#e4e7ed"></div>
<div class="t" style="left:1966px;top:656.9px;font-size:19.5px;color:#f56c6c;font-weight:normal;">删除</div>
<div class="abs" style="left:2028px;top:655.4px;width:1.2px;height:20.5px;background:#e4e7ed"></div>
<div class="t" style="left:2052px;top:656.9px;font-size:19.5px;color:#f56c6c;font-weight:normal;">停售</div>
<div class="abs" style="left:61px;top:758.7px;width:20px;height:20px;border:1.2px solid #dcdfe6;border-radius:3px;background:#fff"></div>
<div class="t" style="left:126px;top:759.4px;font-size:19.5px;color:#333;font-weight:normal;">馋嘴牛蛙</div>
<div class="abs" style="left:411px;top:732.2px;width:60px;height:60px;border-radius:4px;background:#d7d7d7;overflow:hidden"><svg width="60" height="60" viewBox="0 0 60 60" style="position:absolute;left:0;top:0">
<path d="M36 15.6 A17.4 17.4 0 1 0 43.3 27.8" fill="none" stroke="#fff" stroke-width="1.9"/>
<path d="M22.5 29 Q26 22 35 17 Q42 13.5 52 13 Q49 21 44 25.5 Q38 29.8 22.5 29 Z" fill="#fff"/>
<path d="M27.5 24.5 Q36 20 44.6 17.2" stroke="#d8d8d8" stroke-width="0.9" fill="none"/>
<path d="M23.2 28 Q19 30 22 31.5 Q25.5 32.5 23.5 33.4" stroke="#fff" stroke-width="1.3" fill="none"/>
<path d="M14.8 34.9 H38.2 Q36.5 43.8 26 44 Q16.5 43.5 14.8 34.9 Z" fill="#fff"/>
<path d="M17.5 39.6 Q21 38 24 39.6 Q26 40.3 28 39.5" stroke="#d8d8d8" stroke-width="1" fill="none"/>
</svg></div>
<div class="t" style="left:692.5px;top:759.4px;font-size:19.5px;color:#333;font-weight:normal;">蜀味牛蛙</div>
<div class="t" style="left:979px;top:759.4px;font-size:19.5px;color:#333;font-weight:normal;">¥&thinsp;88</div>
<div class="abs" style="left:1257px;top:763.9px;width:7.5px;height:7.5px;border-radius:50%;background:#1dc779"></div>
<div class="t" style="left:1272.5px;top:759.4px;font-size:19.5px;color:#333;font-weight:normal;">启售</div>
<div class="t" style="left:1538.5px;top:758.4px;font-size:19.2px;color:#333;font-weight:normal;">2022-06-10 10:37</div>
<div class="t" style="left:1880.5px;top:759.4px;font-size:19.5px;color:#419eff;font-weight:normal;">修改</div>
<div class="abs" style="left:1942px;top:757.9px;width:1.2px;height:20.5px;background:#e4e7ed"></div>
<div class="t" style="left:1966px;top:759.4px;font-size:19.5px;color:#f56c6c;font-weight:normal;">删除</div>
<div class="abs" style="left:2028px;top:757.9px;width:1.2px;height:20.5px;background:#e4e7ed"></div>
<div class="t" style="left:2052px;top:759.4px;font-size:19.5px;color:#f56c6c;font-weight:normal;">停售</div>
<div class="abs" style="left:61px;top:861.2px;width:20px;height:20px;border:1.2px solid #dcdfe6;border-radius:3px;background:#fff"></div>
<div class="t" style="left:126px;top:861.9px;font-size:19.5px;color:#333;font-weight:normal;">香锅牛蛙</div>
<div class="abs" style="left:411px;top:834.7px;width:60px;height:60px;border-radius:4px;background:#d7d7d7;overflow:hidden"><svg width="60" height="60" viewBox="0 0 60 60" style="position:absolute;left:0;top:0">
<path d="M36 15.6 A17.4 17.4 0 1 0 43.3 27.8" fill="none" stroke="#fff" stroke-width="1.9"/>
<path d="M22.5 29 Q26 22 35 17 Q42 13.5 52 13 Q49 21 44 25.5 Q38 29.8 22.5 29 Z" fill="#fff"/>
<path d="M27.5 24.5 Q36 20 44.6 17.2" stroke="#d8d8d8" stroke-width="0.9" fill="none"/>
<path d="M23.2 28 Q19 30 22 31.5 Q25.5 32.5 23.5 33.4" stroke="#fff" stroke-width="1.3" fill="none"/>
<path d="M14.8 34.9 H38.2 Q36.5 43.8 26 44 Q16.5 43.5 14.8 34.9 Z" fill="#fff"/>
<path d="M17.5 39.6 Q21 38 24 39.6 Q26 40.3 28 39.5" stroke="#d8d8d8" stroke-width="1" fill="none"/>
</svg></div>
<div class="t" style="left:692.5px;top:861.9px;font-size:19.5px;color:#333;font-weight:normal;">蜀味牛蛙</div>
<div class="t" style="left:979px;top:861.9px;font-size:19.5px;color:#333;font-weight:normal;">¥&thinsp;88</div>
<div class="abs" style="left:1257px;top:866.4px;width:7.5px;height:7.5px;border-radius:50%;background:#1dc779"></div>
<div class="t" style="left:1272.5px;top:861.9px;font-size:19.5px;color:#333;font-weight:normal;">启售</div>
<div class="t" style="left:1538.5px;top:860.9px;font-size:19.2px;color:#333;font-weight:normal;">2022-06-10 10:35</div>
<div class="t" style="left:1880.5px;top:861.9px;font-size:19.5px;color:#419eff;font-weight:normal;">修改</div>
<div class="abs" style="left:1942px;top:860.4px;width:1.2px;height:20.5px;background:#e4e7ed"></div>
<div class="t" style="left:1966px;top:861.9px;font-size:19.5px;color:#f56c6c;font-weight:normal;">删除</div>
<div class="abs" style="left:2028px;top:860.4px;width:1.2px;height:20.5px;background:#e4e7ed"></div>
<div class="t" style="left:2052px;top:861.9px;font-size:19.5px;color:#f56c6c;font-weight:normal;">停售</div>
<div class="abs" style="left:61px;top:963.8px;width:20px;height:20px;border:1.2px solid #dcdfe6;border-radius:3px;background:#fff"></div>
<div class="t" style="left:126px;top:964.5px;font-size:19.5px;color:#333;font-weight:normal;">金汤酸菜牛蛙</div>
<div class="abs" style="left:411px;top:937.2px;width:60px;height:60px;border-radius:4px;background:#d7d7d7;overflow:hidden"><svg width="60" height="60" viewBox="0 0 60 60" style="position:absolute;left:0;top:0">
<path d="M36 15.6 A17.4 17.4 0 1 0 43.3 27.8" fill="none" stroke="#fff" stroke-width="1.9"/>
<path d="M22.5 29 Q26 22 35 17 Q42 13.5 52 13 Q49 21 44 25.5 Q38 29.8 22.5 29 Z" fill="#fff"/>
<path d="M27.5 24.5 Q36 20 44.6 17.2" stroke="#d8d8d8" stroke-width="0.9" fill="none"/>
<path d="M23.2 28 Q19 30 22 31.5 Q25.5 32.5 23.5 33.4" stroke="#fff" stroke-width="1.3" fill="none"/>
<path d="M14.8 34.9 H38.2 Q36.5 43.8 26 44 Q16.5 43.5 14.8 34.9 Z" fill="#fff"/>
<path d="M17.5 39.6 Q21 38 24 39.6 Q26 40.3 28 39.5" stroke="#d8d8d8" stroke-width="1" fill="none"/>
</svg></div>
<div class="t" style="left:692.5px;top:964.5px;font-size:19.5px;color:#333;font-weight:normal;">蜀味牛蛙</div>
<div class="t" style="left:979px;top:964.5px;font-size:19.5px;color:#333;font-weight:normal;">¥&thinsp;88</div>
<div class="abs" style="left:1257px;top:969.0px;width:7.5px;height:7.5px;border-radius:50%;background:#1dc779"></div>
<div class="t" style="left:1272.5px;top:964.5px;font-size:19.5px;color:#333;font-weight:normal;">启售</div>
<div class="t" style="left:1538.5px;top:963.5px;font-size:19.2px;color:#333;font-weight:normal;">2022-06-10 10:33</div>
<div class="t" style="left:1880.5px;top:964.5px;font-size:19.5px;color:#419eff;font-weight:normal;">修改</div>
<div class="abs" style="left:1942px;top:963.0px;width:1.2px;height:20.5px;background:#e4e7ed"></div>
<div class="t" style="left:1966px;top:964.5px;font-size:19.5px;color:#f56c6c;font-weight:normal;">删除</div>
<div class="abs" style="left:2028px;top:963.0px;width:1.2px;height:20.5px;background:#e4e7ed"></div>
<div class="t" style="left:2052px;top:964.5px;font-size:19.5px;color:#f56c6c;font-weight:normal;">停售</div>
<div class="abs" style="left:61px;top:1066.3px;width:20px;height:20px;border:1.2px solid #dcdfe6;border-radius:3px;background:#fff"></div>
<div class="t" style="left:126px;top:1067.0px;font-size:19.5px;color:#333;font-weight:normal;">剁椒鱼头</div>
<div class="abs" style="left:411px;top:1039.7px;width:60px;height:60px;border-radius:4px;background:#d7d7d7;overflow:hidden"><svg width="60" height="60" viewBox="0 0 60 60" style="position:absolute;left:0;top:0">
<path d="M36 15.6 A17.4 17.4 0 1 0 43.3 27.8" fill="none" stroke="#fff" stroke-width="1.9"/>
<path d="M22.5 29 Q26 22 35 17 Q42 13.5 52 13 Q49 21 44 25.5 Q38 29.8 22.5 29 Z" fill="#fff"/>
<path d="M27.5 24.5 Q36 20 44.6 17.2" stroke="#d8d8d8" stroke-width="0.9" fill="none"/>
<path d="M23.2 28 Q19 30 22 31.5 Q25.5 32.5 23.5 33.4" stroke="#fff" stroke-width="1.3" fill="none"/>
<path d="M14.8 34.9 H38.2 Q36.5 43.8 26 44 Q16.5 43.5 14.8 34.9 Z" fill="#fff"/>
<path d="M17.5 39.6 Q21 38 24 39.6 Q26 40.3 28 39.5" stroke="#d8d8d8" stroke-width="1" fill="none"/>
</svg></div>
<div class="t" style="left:692.5px;top:1067.0px;font-size:19.5px;color:#333;font-weight:normal;">特色蒸菜</div>
<div class="t" style="left:979px;top:1067.0px;font-size:19.5px;color:#333;font-weight:normal;">¥&thinsp;66</div>
<div class="abs" style="left:1257px;top:1071.5px;width:7.5px;height:7.5px;border-radius:50%;background:#1dc779"></div>
<div class="t" style="left:1272.5px;top:1067.0px;font-size:19.5px;color:#333;font-weight:normal;">启售</div>
<div class="t" style="left:1538.5px;top:1066.0px;font-size:19.2px;color:#333;font-weight:normal;">2022-06-10 10:28</div>
<div class="t" style="left:1880.5px;top:1067.0px;font-size:19.5px;color:#419eff;font-weight:normal;">修改</div>
<div class="abs" style="left:1942px;top:1065.5px;width:1.2px;height:20.5px;background:#e4e7ed"></div>
<div class="t" style="left:1966px;top:1067.0px;font-size:19.5px;color:#f56c6c;font-weight:normal;">删除</div>
<div class="abs" style="left:2028px;top:1065.5px;width:1.2px;height:20.5px;background:#e4e7ed"></div>
<div class="t" style="left:2052px;top:1067.0px;font-size:19.5px;color:#f56c6c;font-weight:normal;">停售</div>
<div class="abs" style="left:61px;top:1168.8px;width:20px;height:20px;border:1.2px solid #dcdfe6;border-radius:3px;background:#fff"></div>
<div class="t" style="left:126px;top:1169.5px;font-size:19.5px;color:#333;font-weight:normal;">梅菜扣肉</div>
<div class="abs" style="left:411px;top:1142.3px;width:60px;height:60px;border-radius:4px;background:#d7d7d7;overflow:hidden"><svg width="60" height="60" viewBox="0 0 60 60" style="position:absolute;left:0;top:0">
<path d="M36 15.6 A17.4 17.4 0 1 0 43.3 27.8" fill="none" stroke="#fff" stroke-width="1.9"/>
<path d="M22.5 29 Q26 22 35 17 Q42 13.5 52 13 Q49 21 44 25.5 Q38 29.8 22.5 29 Z" fill="#fff"/>
<path d="M27.5 24.5 Q36 20 44.6 17.2" stroke="#d8d8d8" stroke-width="0.9" fill="none"/>
<path d="M23.2 28 Q19 30 22 31.5 Q25.5 32.5 23.5 33.4" stroke="#fff" stroke-width="1.3" fill="none"/>
<path d="M14.8 34.9 H38.2 Q36.5 43.8 26 44 Q16.5 43.5 14.8 34.9 Z" fill="#fff"/>
<path d="M17.5 39.6 Q21 38 24 39.6 Q26 40.3 28 39.5" stroke="#d8d8d8" stroke-width="1" fill="none"/>
</svg></div>
<div class="t" style="left:692.5px;top:1169.5px;font-size:19.5px;color:#333;font-weight:normal;">特色蒸菜</div>
<div class="t" style="left:979px;top:1169.5px;font-size:19.5px;color:#333;font-weight:normal;">¥&thinsp;58</div>
<div class="abs" style="left:1257px;top:1174.0px;width:7.5px;height:7.5px;border-radius:50%;background:#1dc779"></div>
<div class="t" style="left:1272.5px;top:1169.5px;font-size:19.5px;color:#333;font-weight:normal;">启售</div>
<div class="t" style="left:1538.5px;top:1168.5px;font-size:19.2px;color:#333;font-weight:normal;">2022-06-10 10:26</div>
<div class="t" style="left:1880.5px;top:1169.5px;font-size:19.5px;color:#419eff;font-weight:normal;">修改</div>
<div class="abs" style="left:1942px;top:1168.0px;width:1.2px;height:20.5px;background:#e4e7ed"></div>
<div class="t" style="left:1966px;top:1169.5px;font-size:19.5px;color:#f56c6c;font-weight:normal;">删除</div>
<div class="abs" style="left:2028px;top:1168.0px;width:1.2px;height:20.5px;background:#e4e7ed"></div>
<div class="t" style="left:2052px;top:1169.5px;font-size:19.5px;color:#f56c6c;font-weight:normal;">停售</div>
</div>
<div class="abs" style="left:285px;top:1523px;width:2253px;height:5px;background:#f3f4f7"></div>
</body></html>
